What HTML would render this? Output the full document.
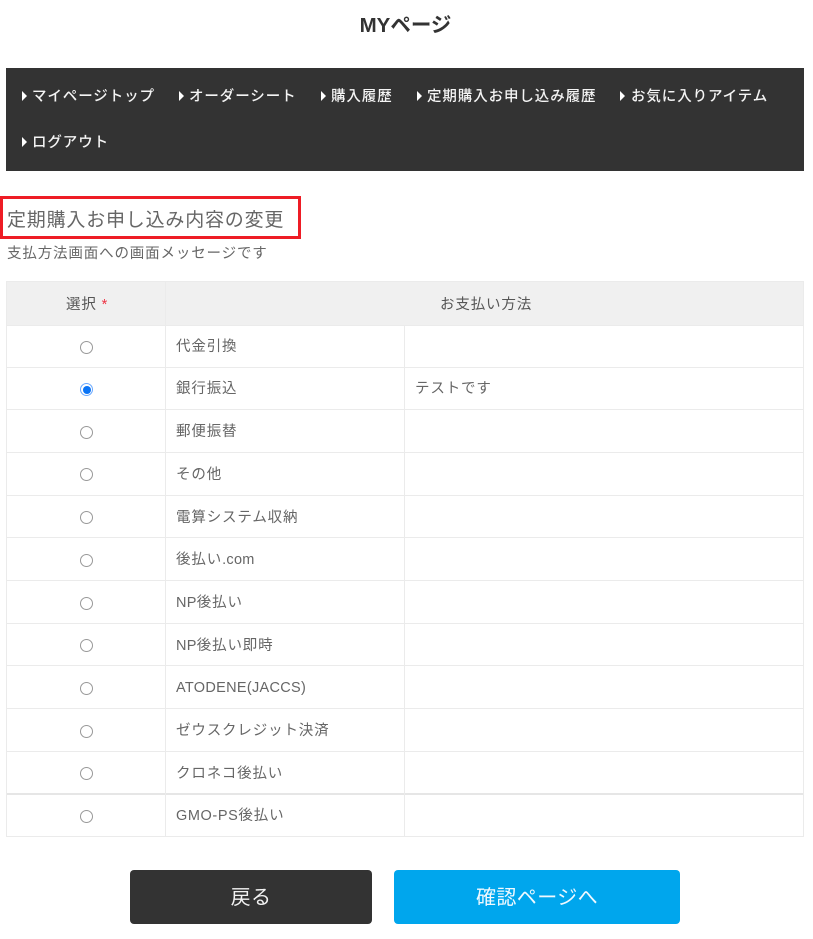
<!DOCTYPE html>
<html lang="ja">
<head>
<meta charset="utf-8">
<title>MYページ</title>
<style>
html,body{margin:0;padding:0;background:#fff}
body{position:relative;width:813px;height:939px;overflow:hidden;font-family:"Liberation Sans","Noto Sans CJK JP",sans-serif;color:#555}
.a{position:absolute;white-space:nowrap}
.t{font-size:14.5px;letter-spacing:.85px;line-height:20px;color:#666;margin-top:1px}
.t b{font-weight:400;letter-spacing:.3px}
.n{font-size:14.5px;font-weight:500;letter-spacing:.9px;line-height:20px;color:#f4f4f4;margin-top:1px}
.tri{position:absolute;width:0;height:0;border-left:5.5px solid #fff;border-top:5px solid transparent;border-bottom:5px solid transparent}
.h{position:absolute;left:7px;width:797px;height:1px;background:#ebebeb}
.v{position:absolute;width:1px;background:#ebebeb}
.r{position:absolute;left:80px;width:11px;height:11px;border:1.5px solid #999;border-radius:50%;background:#fff;box-sizing:content-box}
</style>
</head>
<body>
<div class="a" style="left:0;top:13px;width:811px;text-align:center;font-size:20.5px;font-weight:700;line-height:26px;color:#333">MYページ</div>

<div class="a" style="left:6px;top:68px;width:798px;height:103px;background:#333;border:0"></div>
<i class="tri" style="left:21.5px;top:91px"></i><div class="a n" style="left:32px;top:86px">マイページトップ</div>
<i class="tri" style="left:178.5px;top:91px"></i><div class="a n" style="left:189px;top:86px">オーダーシート</div>
<i class="tri" style="left:320.5px;top:91px"></i><div class="a n" style="left:331px;top:86px">購入履歴</div>
<i class="tri" style="left:416.5px;top:91px"></i><div class="a n" style="left:427px;top:86px">定期購入お申し込み履歴</div>
<i class="tri" style="left:619.5px;top:91px"></i><div class="a n" style="left:631px;top:86px">お気に入りアイテム</div>
<i class="tri" style="left:21.5px;top:137px"></i><div class="a n" style="left:32px;top:132px">ログアウト</div>

<div class="a" style="left:0;top:196px;width:301px;height:43px;border:3px solid #ee1c25;box-sizing:border-box"></div>
<div class="a" style="left:7px;top:208px;font-size:19px;letter-spacing:.8px;line-height:26px;color:#666">定期購入お申し込み内容の変更</div>
<div class="a t" style="left:7px;top:243px">支払方法画面への画面メッセージです</div>

<div class="a" style="left:7px;top:282px;width:797px;height:43px;background:#f0f0f0"></div>
<div class="h" style="top:281px"></div>
<div class="h" style="top:325px"></div>
<div class="h" style="top:367px"></div>
<div class="h" style="top:409px"></div>
<div class="h" style="top:452px"></div>
<div class="h" style="top:495px"></div>
<div class="h" style="top:537px"></div>
<div class="h" style="top:580px"></div>
<div class="h" style="top:623px"></div>
<div class="h" style="top:665px"></div>
<div class="h" style="top:708px"></div>
<div class="h" style="top:751px"></div>
<div class="h" style="top:793px;height:2px;background:#e6e6e6"></div>
<div class="h" style="top:836px"></div>
<div class="v" style="left:6px;top:281px;height:556px"></div>
<div class="v" style="left:165px;top:281px;height:556px"></div>
<div class="v" style="left:404px;top:325px;height:511px"></div>
<div class="v" style="left:803px;top:281px;height:556px"></div>

<div class="a t" style="left:66px;top:294px;color:#555">選択 <span style="color:#ee3344">*</span></div>
<div class="a t" style="left:440px;top:294px;color:#555">お支払い方法</div>

<div class="r" style="top:340.5px"></div>
<div class="r" style="top:383px;border-color:#6aa9ff"></div>
<div class="a" style="left:83.2px;top:386.2px;width:8px;height:8px;background:#0a74f5;border-radius:50%"></div>
<div class="r" style="top:426px"></div>
<div class="r" style="top:468px"></div>
<div class="r" style="top:511px"></div>
<div class="r" style="top:554px"></div>
<div class="r" style="top:597px"></div>
<div class="r" style="top:639px"></div>
<div class="r" style="top:682px"></div>
<div class="r" style="top:725px"></div>
<div class="r" style="top:767px"></div>
<div class="r" style="top:810px"></div>

<div class="a t" style="left:176px;top:336px">代金引換</div>
<div class="a t" style="left:176px;top:378px">銀行振込</div>
<div class="a t" style="left:415px;top:378px">テストです</div>
<div class="a t" style="left:176px;top:421px">郵便振替</div>
<div class="a t" style="left:176px;top:464px">その他</div>
<div class="a t" style="left:176px;top:507px">電算システム収納</div>
<div class="a t" style="left:176px;top:549px">後払い<b>.com</b></div>
<div class="a t" style="left:176px;top:592px"><b>NP</b>後払い</div>
<div class="a t" style="left:176px;top:635px"><b>NP</b>後払い即時</div>
<div class="a t" style="left:176px;top:677px"><b>ATODENE(JACCS)</b></div>
<div class="a t" style="left:176px;top:720px">ゼウスクレジット決済</div>
<div class="a t" style="left:176px;top:763px">クロネコ後払い</div>
<div class="a t" style="left:176px;top:805px"><b style="letter-spacing:.6px">GMO-PS</b>後払い</div>

<div class="a" style="left:130px;top:870px;width:242px;height:54px;background:#333;border-radius:4px;color:#f2f2f2;font-size:20px;letter-spacing:.4px;line-height:56px;text-align:center">戻る</div>
<div class="a" style="left:394px;top:870px;width:286px;height:54px;background:#00a6ed;border-radius:4px;color:#f0f9ff;font-size:20px;letter-spacing:.4px;line-height:56px;text-align:center">確認ページへ</div>
</body>
</html>
